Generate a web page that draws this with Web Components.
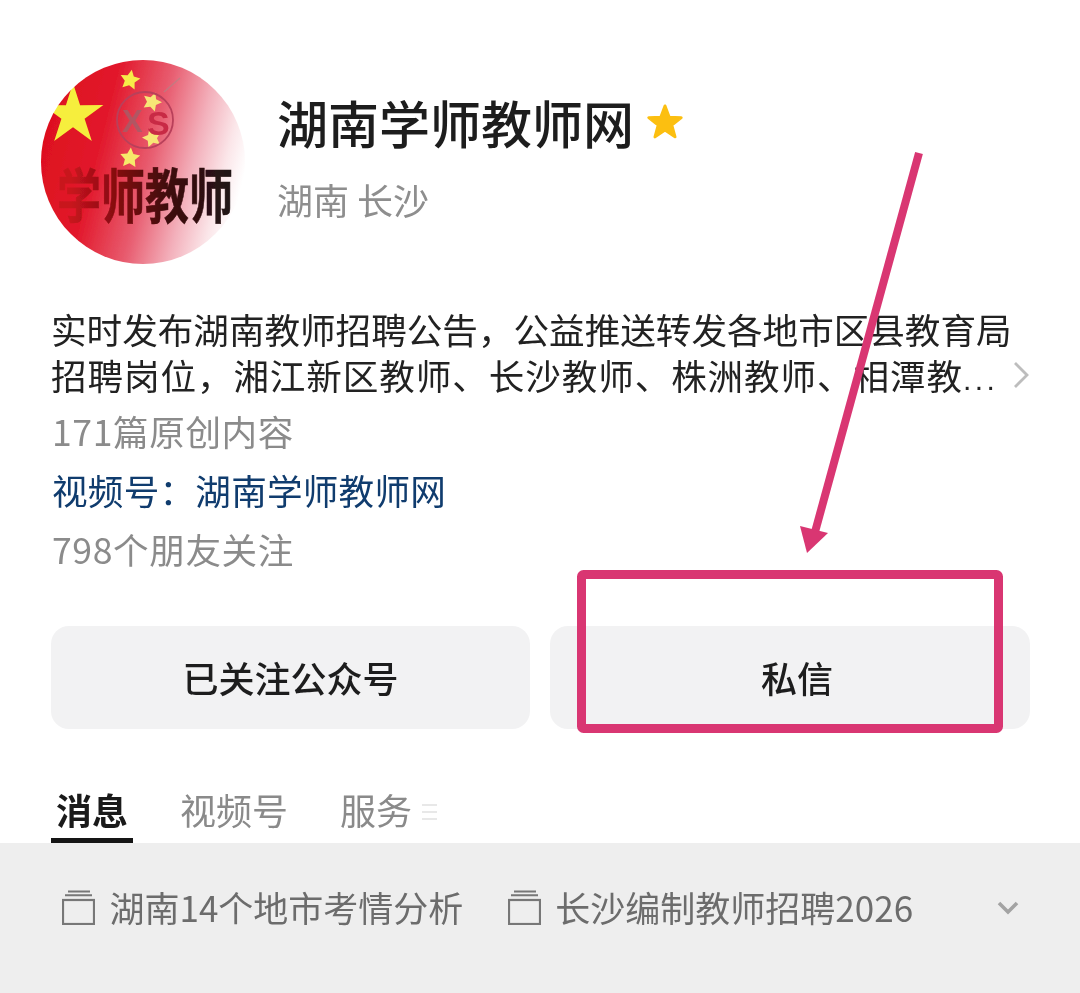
<!DOCTYPE html>
<html lang="zh-CN">
<head>
<meta charset="utf-8">
<title>湖南学师教师网</title>
<style>
  html, body { margin: 0; padding: 0; background: #fff; }
  body {
    width: 1080px;
    height: 993px;
    overflow: hidden;
    position: relative;
    font-family: "Noto Sans CJK SC", "Noto Sans", sans-serif;
  }
</style>
</head>
<body>
  <account-page>
    <account-header name="湖南学师教师网" place="湖南 长沙"></account-header>
    <account-bio></account-bio>
    <account-actions></account-actions>
    <account-tabs></account-tabs>
    <album-bar></album-bar>
  </account-page>
  <red-annotation></red-annotation>

<script>
  /* Page column */
  class AccountPage extends HTMLElement {
    constructor() {
      super();
      this.attachShadow({ mode: 'open' });
      this.shadowRoot.innerHTML = `
        <style>
          :host { display: flex; flex-direction: column; width: 1080px; height: 993px; }
        </style>
        <slot></slot>
      `;
    }
  }

  /* Avatar + name + location */
  class AccountHeader extends HTMLElement {
    constructor() {
      super();
      this.attachShadow({ mode: 'open' });
    }

    connectedCallback() {
      const star = (cx, cy, r, rot = 0, inner = 0.42) => {
        const pts = [];
        for (let i = 0; i < 10; i++) {
          const rad = i % 2 ? r * inner : r;
          const a = (-90 + rot + i * 36) * Math.PI / 180;
          pts.push((cx + rad * Math.cos(a)).toFixed(1) + ',' + (cy + rad * Math.sin(a)).toFixed(1));
        }
        return pts.join(' ');
      };
      this.shadowRoot.innerHTML = `
        <style>
          :host { display: flex; padding: 60px 0 0 41px; height: 237px; box-sizing: border-box; gap: 32px; }
          .avatar { width: 204px; height: 204px; flex: none; display: block; }
          .info { display: flex; flex-direction: column; }
          .title { display: flex; align-items: center; gap: 11px; margin-top: 27px; height: 70px; }
          .name { font-size: 51px; line-height: 70px; font-weight: 500; color: #1d1d1d; white-space: nowrap; }
          .title svg { width: 40px; height: 40px; flex: none; margin-top: 0; }
          .place { font-size: 36px; line-height: 44px; color: #8e8e8e; margin-top: 20px; white-space: nowrap; }
        </style>
        <svg class="avatar" viewBox="0 0 204 204">
          <defs>
            <linearGradient id="flag" x1="0" x2="1" y1="0.3" y2="0.55">
              <stop offset="0" stop-color="#dd0f1d"/>
              <stop offset="0.3" stop-color="#e2192c"/>
              <stop offset="0.55" stop-color="#e85d70"/>
              <stop offset="0.75" stop-color="#f3b0bb"/>
              <stop offset="0.9" stop-color="#fbe6e9"/>
              <stop offset="1" stop-color="#ffffff"/>
            </linearGradient>
            <linearGradient id="ink" gradientUnits="userSpaceOnUse" x1="14" x2="190" y1="0" y2="0">
              <stop offset="0" stop-color="#c8141e"/>
              <stop offset="0.25" stop-color="#860a10"/>
              <stop offset="0.55" stop-color="#3e0a0d"/>
              <stop offset="1" stop-color="#1a1717"/>
            </linearGradient>
            <clipPath id="round"><circle cx="102" cy="102" r="102"/></clipPath>
            <filter id="soft"><feGaussianBlur stdDeviation="0.5"/></filter>
          </defs>
          <g clip-path="url(#round)" filter="url(#soft)">
            <rect width="204" height="204" fill="url(#flag)"/>
            <polygon points="${star(32, 55, 32, 0, 0.38)}" fill="#f6ee3c"/>
            <polygon points="${star(89, 20, 10.5, 10, 0.5)}" fill="#f7ec4a"/>
            <polygon points="${star(111, 42, 10, 20, 0.5)}" fill="#f7e676"/>
            <polygon points="${star(111, 78, 10, -15, 0.5)}" fill="#f7e676"/>
            <polygon points="${star(89, 98, 10.5, 5, 0.5)}" fill="#f7e96a"/>
            <circle cx="104" cy="60" r="28" fill="none" stroke="#b9405a" stroke-width="1.8"/>
            <path d="M123 32 L139 18" stroke="#a88" stroke-width="1.5" opacity=".6"/>
            <text x="81" y="72" font-family="Liberation Sans, sans-serif" font-weight="700" font-size="31" fill="#a0606a" opacity=".75">X</text>
            <text x="106" y="75" font-family="Liberation Sans, sans-serif" font-weight="700" font-size="34" fill="#c82a45">S</text>
            <text transform="translate(16 158) scale(1 1.34)" font-family="Noto Sans CJK SC, sans-serif" font-weight="700" font-size="44" fill="url(#ink)" stroke="url(#ink)" stroke-width="0.5">学师教师</text>
          </g>
        </svg>
        <div class="info">
          <div class="title">
            <span class="name">${this.getAttribute('name')}</span>
            <svg viewBox="0 0 40 40"><polygon points="${star(20, 21, 17)}" fill="#fcbf10" stroke="#fcbf10" stroke-width="3" stroke-linejoin="round"/></svg>
          </div>
          <span class="place">${this.getAttribute('place')}</span>
        </div>
      `;
    }
  }

  /* Description lines and stats */
  class AccountBio extends HTMLElement {
    constructor() {
      super();
      this.attachShadow({ mode: 'open' });
      this.shadowRoot.innerHTML = `
        <style>
          :host { display: block; padding: 69px 50px 0 51px; font-size: 35.6px; }
          .desc { display: flex; align-items: flex-end; justify-content: space-between; color: #222; line-height: 46px; height: 92px; }
          .lines { width: 960px; white-space: nowrap; }
          .wide { letter-spacing: 0.9px; }
          .dots { font-family: "Liberation Sans", sans-serif; letter-spacing: 3.5px; font-size: 30px; line-height: 1; }
          .desc svg { width: 17px; height: 30px; margin-bottom: 8px; flex: none; }
          .stat { color: #8b8b8b; line-height: 59px; white-space: nowrap; letter-spacing: 0.6px; padding-left: 1px; }
          .first { margin-top: 3px; }
          .video { color: #103c6e; letter-spacing: 0.25px; }
        </style>
        <div class="desc">
          <div class="lines">实时发布湖南教师招聘公告，公益推送转发各地市区县教育局<br><span class="wide">招聘岗位，湘江新区教师、长沙教师、株洲教师、相潭教</span><span class="dots">...</span></div>
          <svg viewBox="0 0 17 30"><path d="M2 3 L14 15 L2 27" fill="none" stroke="#bdbdbd" stroke-width="2.8"/></svg>
        </div>
        <div class="stat first">171篇原创内容</div>
        <div class="stat video">视频号：湖南学师教师网</div>
        <div class="stat">798个朋友关注</div>
      `;
    }
  }

  /* Follow / message buttons */
  class AccountActions extends HTMLElement {
    constructor() {
      super();
      this.attachShadow({ mode: 'open' });
      this.shadowRoot.innerHTML = `
        <style>
          :host { display: grid; grid-template-columns: 479px 480px; gap: 20px; padding: 48px 50px 0 51px; }
          div {
            height: 103px;
            background: #f2f2f3;
            border-radius: 18px;
            display: flex;
            align-items: center;
            justify-content: center;
            font-size: 36px;
            line-height: 50px;
            padding-bottom: 2px;
            box-sizing: border-box;
            font-weight: 500;
            color: #1d1d1d;
          }
          .dm { padding-left: 14px; }
        </style>
        <div>已关注公众号</div>
        <div class="dm">私信</div>
      `;
    }
  }

  /* Message / video / service tabs */
  class AccountTabs extends HTMLElement {
    constructor() {
      super();
      this.attachShadow({ mode: 'open' });
      this.shadowRoot.innerHTML = `
        <style>
          :host { display: flex; align-items: stretch; gap: 42px; padding: 56px 0 0 51px; height: 58px; font-size: 36px; color: #8a8a8a; }
          .tab { padding: 0 5px; line-height: 48px; height: 58px; box-sizing: border-box; white-space: nowrap; }
          .on { color: #1a1a1a; font-weight: 700; border-bottom: 5px solid #151515; }
          .more { display: flex; align-items: center; margin-left: -38px; height: 54px; }
          .more svg { width: 17px; height: 18px; }
        </style>
        <div class="tab on">消息</div>
        <div class="tab">视频号</div>
        <div class="tab">服务</div>
        <div class="more"><svg viewBox="0 0 17 18"><path d="M1 2H16M1 9H16M1 16H16" stroke="#e8e8e8" stroke-width="2"/></svg></div>
      `;
    }
  }

  /* Grey album strip */
  class AlbumBar extends HTMLElement {
    constructor() {
      super();
      this.attachShadow({ mode: 'open' });
      const folder = `<svg viewBox="0 0 33 35"><path d="M6 1.6H28M3 5.2H30" stroke="#777" stroke-width="2" fill="none"/><rect x="1" y="10" width="31" height="24" fill="none" stroke="#777" stroke-width="2.2"/></svg>`;
      this.shadowRoot.innerHTML = `
        <style>
          :host { display: flex; flex: 1; align-items: flex-start; background: #eeeeee; padding: 42px 0 0 62px; color: #6c6c6c; font-size: 35px; }
          .album { display: flex; align-items: center; gap: 14.5px; white-space: nowrap; line-height: 48px; margin-top: -2px; }
          .album svg { width: 33px; height: 35px; flex: none; margin-top: 1px; }
          .album + .album { margin-left: 44.5px; }
          .chev { width: 22px; height: 16px; margin: 15px 61px 0 auto; flex: none; }
        </style>
        <div class="album">${folder}<span>湖南14个地市考情分析</span></div>
        <div class="album">${folder}<span>长沙编制教师招聘2026</span></div>
        <svg class="chev" viewBox="0 0 22 16"><path d="M2 3 L11 12 L20 3" fill="none" stroke="#a3a3a3" stroke-width="3.6"/></svg>
      `;
    }
  }

  /* Hand-drawn arrow and box lying over the screenshot */
  class RedAnnotation extends HTMLElement {
    constructor() {
      super();
      this.attachShadow({ mode: 'open' });
      this.shadowRoot.innerHTML = `
        <style>
          :host { position: absolute; inset: 0; display: block; pointer-events: none; }
          svg { width: 1080px; height: 993px; display: block; }
        </style>
        <svg viewBox="0 0 1080 993">
          <path d="M919 153 L815 532" stroke="#d93672" stroke-width="8" fill="none"/>
          <polygon points="800,526 828,533 807,553" fill="#d93672"/>
          <rect x="581.5" y="574.5" width="417" height="154" rx="2" fill="none" stroke="#d93672" stroke-width="9"/>
        </svg>
      `;
    }
  }

  customElements.define('account-page', AccountPage);
  customElements.define('account-header', AccountHeader);
  customElements.define('account-bio', AccountBio);
  customElements.define('account-actions', AccountActions);
  customElements.define('account-tabs', AccountTabs);
  customElements.define('album-bar', AlbumBar);
  customElements.define('red-annotation', RedAnnotation);
</script>
</body>
</html>
